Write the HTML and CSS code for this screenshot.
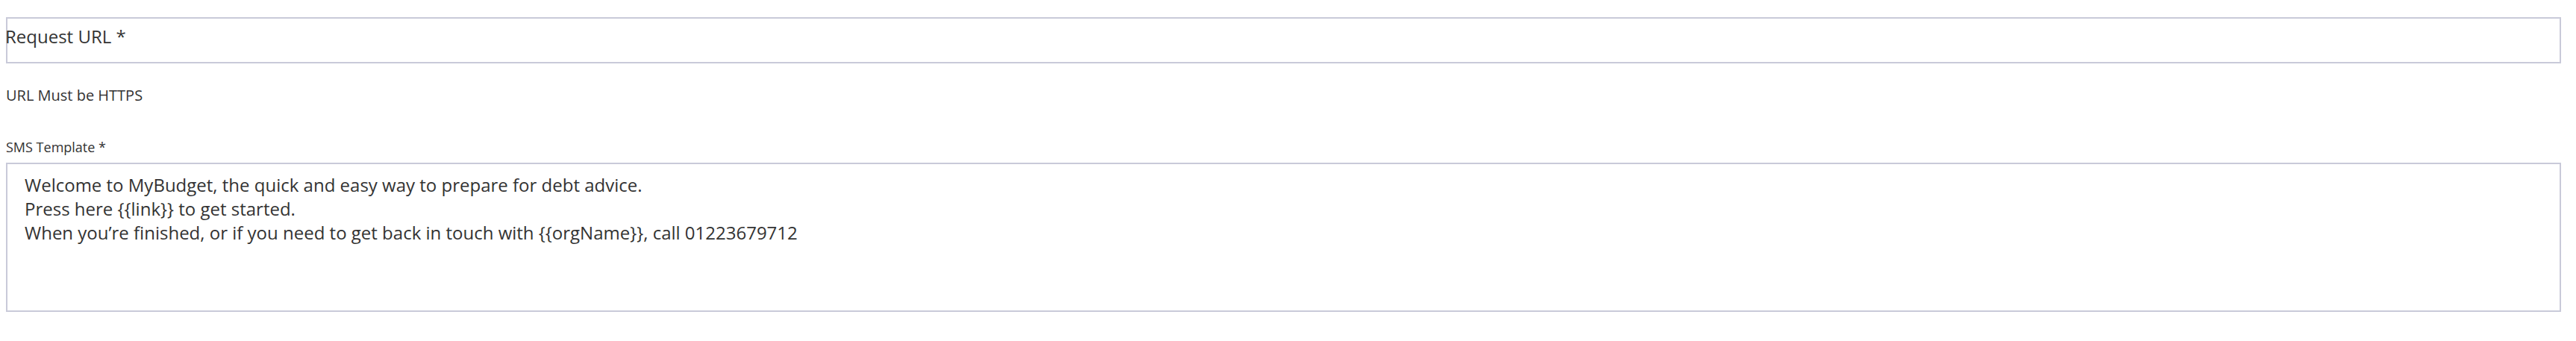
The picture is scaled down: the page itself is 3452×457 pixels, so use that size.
FILE: index.html
```html
<!DOCTYPE html>
<html lang="en">
<head>
    <meta charset="UTF-8">
    <meta name="viewport" content="width=device-width, initial-scale=1.0">
    <title>SMS Settings</title>
    <link rel="stylesheet" href="styles.css">
</head>
<body>
    <div class="form">
        <div class="url-field">
            <span class="url-label">Request URL *</span>
        </div>
        <div class="hint">URL Must be HTTPS</div>

        <label class="sms-label" for="smsTemplate">SMS Template *</label>
        <textarea id="smsTemplate" class="sms-template">Welcome to MyBudget, the quick and easy way to prepare for debt advice.
Press here {{link}} to get started.
When you’re finished, or if you need to get back in touch with {{orgName}}, call 01223679712</textarea>
    </div>
</body>
</html>
```

FILE: styles.css
```css
body {
    font-family: "Open Sans", "Noto Sans", sans-serif;
    background-color: #ffffff;
    color: #333333;
    margin: 0;
}
.form {
    padding: 23px 20px 0 8px;
}
.url-field {
    height: 62px;
    border: 2px solid #c9cad9;
    box-sizing: border-box;
    padding-top: 7px;
}
.url-label {
    display: block;
    margin-left: -3px;
    font-size: 24px;
    line-height: 33px;
}
.hint {
    margin-top: 29px;
    font-size: 20px;
    line-height: 27px;
}
.sms-label {
    display: block;
    margin-top: 44px;
    font-size: 18px;
    line-height: 24px;
}
.sms-template {
    display: block;
    width: 100%;
    height: 200px;
    margin: 9px 0 0 0;
    padding: 12px 23px;
    box-sizing: border-box;
    border: 2px solid #c9cad9;
    border-radius: 0;
    font-family: "Open Sans", "Noto Sans", sans-serif;
    font-size: 24px;
    line-height: 32px;
    color: #333333;
    resize: none;
    overflow: hidden;
    outline: none;
}
```
